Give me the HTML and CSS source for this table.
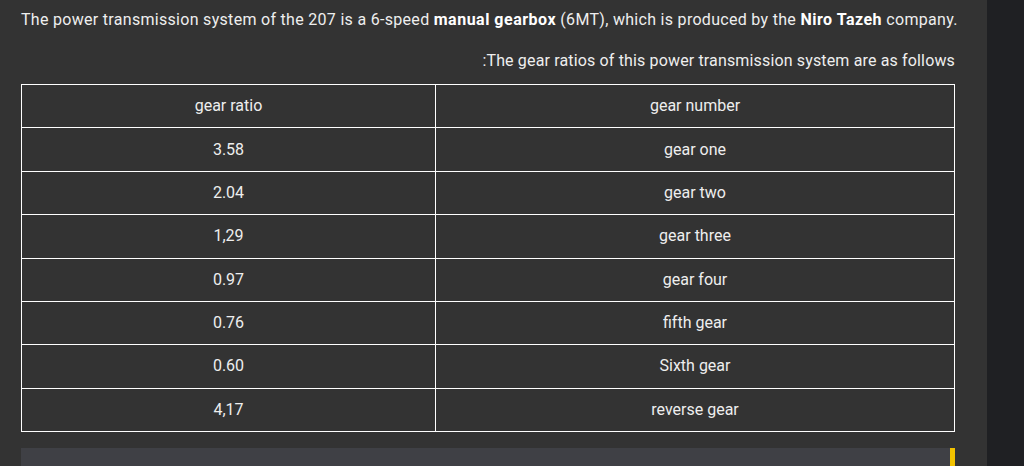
FILE: index.html
```html
<!DOCTYPE html>
<html lang="en">
<head>
<meta charset="utf-8">
<title>207 gearbox</title>
<link rel="stylesheet" href="styles.css">
</head>
<body>
<div class="page">
  <main class="main">
    <p class="intro">The power transmission system of the 207 is a 6-speed <strong>manual gearbox</strong> (6MT), which is produced by the <strong>Niro Tazeh</strong> company.</p>
    <p class="lead">:The gear ratios of this power transmission system are as follows</p>
    <table class="gears">
      <tr><td class="c1">gear ratio</td><td>gear number</td></tr>
      <tr><td class="c1">3.58</td><td>gear one</td></tr>
      <tr><td class="c1">2.04</td><td>gear two</td></tr>
      <tr><td class="c1">1,29</td><td>gear three</td></tr>
      <tr><td class="c1">0.97</td><td>gear four</td></tr>
      <tr><td class="c1">0.76</td><td>fifth gear</td></tr>
      <tr><td class="c1">0.60</td><td>Sixth gear</td></tr>
      <tr><td class="c1">4,17</td><td>reverse gear</td></tr>
    </table>
    <div class="note"></div>
  </main>
  <aside class="side"></aside>
</div>
</body>
</html>
```
FILE: styles.css
```css
html, body {
  margin: 0;
  padding: 0;
  background: #333333;
  height: 100%;
  overflow: hidden;
}
body {
  font-family: Roboto, "Liberation Sans", sans-serif;
  color: #eeeeee;
  font-size: 16px;
}
.page {
  display: flex;
  height: 466px;
}
.main {
  width: 987px;
  box-sizing: border-box;
  padding: 10px 32px 0 21px;
  background: #333333;
}
.side {
  flex: 1;
  background: #1f2023;
}
.intro {
  margin: 0;
  line-height: 20px;
  letter-spacing: 0.3px;
  white-space: nowrap;
}
.intro strong {
  font-weight: 700;
  color: #ffffff;
  letter-spacing: 0.5px;
}
.lead {
  margin: 21px 0 0;
  line-height: 20px;
  text-align: right;
  letter-spacing: 0.15px;
}
.gears {
  margin-top: 13px;
  width: 100%;
  border-collapse: collapse;
}
.gears td {
  border: 1px solid #ffffff;
  text-align: center;
  padding: 0 8px;
  height: 43.375px;
  box-sizing: border-box;
  line-height: 20px;
}
.gears .c1 {
  width: 414px;
}
.note {
  margin-top: 16px;
  height: 40px;
  background: #3f4045;
  border-right: 5px solid #f2c200;
}
```
